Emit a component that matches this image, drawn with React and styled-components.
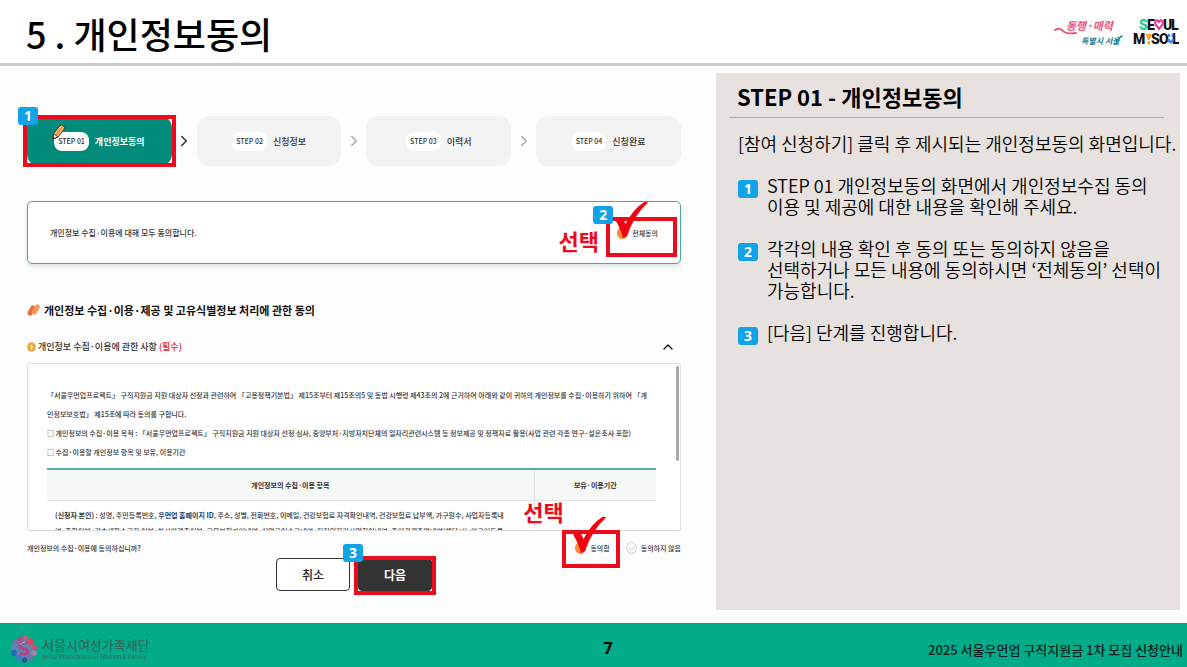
import React from 'react'
import styled, { createGlobalStyle } from 'styled-components'
import { FiChevronRight, FiChevronUp } from 'react-icons/fi'

const steps = [
  { no: 'STEP 01', label: '개인정보동의' },
  { no: 'STEP 02', label: '신청정보' },
  { no: 'STEP 03', label: '이력서' },
  { no: 'STEP 04', label: '신청완료' },
]

const guides = [
  [
    'STEP 01 개인정보동의 화면에서 개인정보수집 동의',
    '이용 및 제공에 대한 내용을 확인해 주세요.',
  ],
  [
    '각각의 내용 확인 후 동의 또는 동의하지 않음을',
    '선택하거나 모든 내용에 동의하시면 ‘전체동의’ 선택이',
    '가능합니다.',
  ],
  ['[다음] 단계를 진행합니다.'],
]

export default function App() {
  return (
    <>
      <GlobalStyle />
      <Page>
        <Header>
          <h1>5 . 개인정보동의</h1>
          <Logos>
            <SloganLogo />
            <SeoulLogo />
          </Logos>
        </Header>
        <Main>
          <FormArea />
          <GuidePanel />
        </Main>
        <Footer>
          <Foundation>
            <FoundationMark />
            <div>
              <strong>서울시여성가족재단</strong>
              <small>Seoul Foundation of Women &amp; Family</small>
            </div>
          </Foundation>
          <PageNumber>7</PageNumber>
          <FooterTitle>2025 서울우먼업 구직지원금 1차 모집 신청안내</FooterTitle>
        </Footer>
      </Page>
    </>
  )
}

const FormArea = () => {
  return (
    <Form onSubmit={(e) => e.preventDefault()}>
      <Steps>
        {steps.map((step, i) => (
          <React.Fragment key={step.no}>
            {i > 0 && (
              <StepArrow $active={i === 1} aria-hidden='true'>
                <FiChevronRight />
              </StepArrow>
            )}
            <Step $active={i === 0}>
              <StepNo>{step.no}</StepNo>
              <span>{step.label}</span>
              {i === 0 && (
                <>
                  <PencilIcon />
                  <StepFrame />
                  <StepBadge>1</StepBadge>
                </>
              )}
            </Step>
          </React.Fragment>
        ))}
      </Steps>

      <AgreeAll>
        <p>개인정보 수집·이용에 대해 모두 동의합니다.</p>
        <Option>
          <RoundInput type='checkbox' defaultChecked />
          전체동의
          <AllFrame />
          <CheckMark />
          <AllBadge>2</AllBadge>
          <AllPick>선택</AllPick>
        </Option>
      </AgreeAll>

      <SectionTitle>
        <LeafIcon />
        개인정보 수집·이용·제공 및 고유식별정보 처리에 관한 동의
      </SectionTitle>

      <TermsTitle>
        <h3>
          <CoinIcon />
          개인정보 수집·이용에 관한 사항 <em>(필수)</em>
        </h3>
        <ToggleButton type='button' aria-label='접기'>
          <FiChevronUp />
        </ToggleButton>
      </TermsTitle>

      <Terms>
        <p>
          「서울우먼업프로젝트」 구직지원금 지원 대상자 선정과 관련하여
          「고용정책기본법」 제15조부터 제15조의5 및 동법 시행령 제43조의 2에
          근거하여 아래와 같이 귀하의 개인정보를 수집·이용하기 위하여 「개
          <br />
          인정보보호법」 제15조에 따라 동의를 구합니다.
        </p>
        <p>
          □ 개인정보의 수집·이용 목적 : 「서울우먼업프로젝트」 구직지원금 지원
          대상자 선정 심사, 중앙부처·지방자치단체의 일자리관련시스템 등 정보제공
          및 정책자료 활용(사업 관련 각종 연구·설문조사 포함)
        </p>
        <p>□ 수집·이용할 개인정보 항목 및 보유, 이용기간</p>
        <TermsTable>
          <thead>
            <tr>
              <th>개인정보의 수집·이용 항목</th>
              <th>보유·이용기간</th>
            </tr>
          </thead>
          <tbody>
            <tr>
              <td>
                <b>(신청자 본인)</b> : 성명, 주민등록번호,{' '}
                <strong>우먼업 홈페이지 ID</strong>, 주소, 성별, 전화번호,
                이메일, 건강보험료 자격확인내역, 건강보험료 납부액, 가구원수,
                사업자등록내
                <br />
                역, 혼합여부, 기초생활수급자 여부, 차상위계층여부,
                고용보험가입내역, 실업급여수급내역, 직접일자리사업참여내역,
                혼인관계증명내역(해당시), 외국인등록
              </td>
              <td>동의일로부터 5년</td>
            </tr>
          </tbody>
        </TermsTable>
        <ScrollThumb />
      </Terms>

      <Question>
        <p>개인정보의 수집·이용에 동의하십니까?</p>
        <Options>
          <Option>
            <RoundInput type='radio' name='agree' defaultChecked />
            동의함
            <YesFrame />
            <CheckMark />
            <YesPick>선택</YesPick>
          </Option>
          <Option>
            <RoundInput type='radio' name='agree' />
            동의하지 않음
            <FaintCheck viewBox='0 0 12 12'>
              <path d='M3 6.2 5.2 8.4 9 4' />
            </FaintCheck>
          </Option>
        </Options>
      </Question>

      <Actions>
        <ActionButton type='button'>취소</ActionButton>
        <NextWrap>
          <ActionButton type='submit' $dark>
            다음
          </ActionButton>
          <NextFrame />
          <NextBadge>3</NextBadge>
        </NextWrap>
      </Actions>
    </Form>
  )
}

const GuidePanel = () => {
  return (
    <Panel>
      <h2>STEP 01 - 개인정보동의</h2>
      <p>[참여 신청하기] 클릭 후 제시되는 개인정보동의 화면입니다.</p>
      <ol>
        {guides.map((lines, i) => (
          <li key={lines[0]}>
            <Badge>{i + 1}</Badge>
            <div>
              {lines.map((line) => (
                <div key={line}>{line}</div>
              ))}
            </div>
          </li>
        ))}
      </ol>
    </Panel>
  )
}

const PencilIcon = () => (
  <Pencil viewBox='0 0 14 16'>
    <path d='M1.5 9.5 8 1.5Q9.5.3 11.5 2 13.2 3.5 12.3 5L6 13 1 15Z' fill='#f6b469' stroke='#4a3626' />
    <path d='M1.5 9.5 6 13 1 15Z' fill='#f5e9dc' stroke='#4a3626' />
    <path d='M4 11 10 3.3' stroke='#c9803d' />
    <path d='M1.2 12.6 3 14.2.6 15.4Z' fill='#222' />
  </Pencil>
)

const CheckMark = () => (
  <Check viewBox='0 0 34 38'>
    <path d='M1 18.500 8 16.500Q10 19 11.500 23 19 8 31 .5L34 1.500Q20 14 13 35L9 37Q6 26 1 18.500Z' />
  </Check>
)

const LeafIcon = () => (
  <svg width='14' height='14' viewBox='0 0 14 14' aria-hidden='true'>
    <rect x='2' y='2' width='5' height='11' rx='2.500' transform='rotate(28 4.500 7.500)' fill='#ea6a36' />
    <rect x='6.500' y='1' width='5' height='11' rx='2.500' transform='rotate(28 9 6.500)' fill='#f99a5c' />
  </svg>
)

const CoinIcon = () => (
  <svg width='9' height='10' viewBox='0 0 9 10' aria-hidden='true'>
    <ellipse cx='4.500' cy='5' rx='4.300' ry='4.800' fill='#f3a536' />
    <path d='M3.600 3 5.500 5 3.600 7' fill='none' stroke='#fff' strokeWidth='1.200' />
  </svg>
)

const SloganLogo = () => (
  <svg width='70' height='32' viewBox='0 0 70 32' role='img' aria-label='동행·매력 특별시 서울'>
    <g fontFamily='"Noto Sans CJK KR", sans-serif' fontWeight='700' fontStyle='italic'>
      <text x='12' y='14' fontSize='11' fill='#e2587f'>동행·매력</text>
      <text x='27' y='28' fontSize='8' fill='#23829c'>특별시 서울</text>
    </g>
    <path d='M1 14Q5 11.500 8 14 11 18.500 22 17' fill='none' stroke='#e2587f' strokeWidth='2' strokeLinecap='round' />
    <path d='M63 26Q65 21 68 20' fill='none' stroke='#23829c' strokeWidth='1.500' strokeLinecap='round' />
  </svg>
)

const SeoulLogo = () => (
  <svg width='46' height='32' viewBox='0 0 46 32' role='img' aria-label='SEOUL MY SOUL'>
    <g fontFamily='Roboto, "Liberation Sans", sans-serif' fontWeight='900' fontSize='14' fill='#111'>
      <text x='6' y='14' fill='#1fd08a'>S</text>
      <text x='14' y='14'>E</text>
      <text x='30' y='14'>U</text>
      <text x='38' y='14'>L</text>
      <text x='0' y='28'>M</text>
      <text x='18' y='28'>S</text>
      <text x='26' y='28'>O</text>
      <text x='39' y='28'>L</text>
    </g>
    <path d='M26 13 22.400 8Q21.400 4.200 24 4.200 25.500 4.500 26 6.500 26.500 4.500 28 4.200 30.600 4.200 29.600 8Z' fill='none' stroke='#f0308c' strokeWidth='2' />
    <path d='M12.500 18H19L16.600 24H14.900Z' fill='#f9a72b' />
    <circle cx='15.800' cy='26.600' r='1.600' fill='#f9a72b' />
    <path d='M35 18H37V21H35ZM38.500 18H40.500V21H38.500Z' fill='#2f86ee' />
    <path d='M35.300 23Q37.800 29.500 40.300 23' fill='none' stroke='#2f86ee' strokeWidth='2.400' />
  </svg>
)

const FoundationMark = () => (
  <svg width='28' height='28' viewBox='0 0 28 28' aria-hidden='true'>
    <circle cx='14' cy='14' r='11' fill='#5f86a8' />
    <circle cx='10' cy='3.800' r='2.600' fill='#a8507a' />
    <circle cx='15.500' cy='2.600' r='2.300' fill='#d9566f' />
    <circle cx='20.500' cy='6.500' r='3.200' fill='#e8405f' />
    <circle cx='24.500' cy='12' r='2.600' fill='#d84a72' />
    <circle cx='24' cy='18' r='2.800' fill='#b07ab4' />
    <circle cx='20' cy='22.500' r='3' fill='#7c6cb4' />
    <circle cx='14.500' cy='25' r='2.700' fill='#2d55a5' />
    <circle cx='8.500' cy='23' r='2.800' fill='#3b7cc4' />
    <circle cx='4' cy='18' r='2.900' fill='#2b67b8' />
    <circle cx='3.500' cy='12' r='2.500' fill='#6a7fc0' />
    <circle cx='5' cy='7' r='2.300' fill='#8d6ba5' />
    <path d='M17 8Q11 6.500 9.800 10 9.500 13 14 13.700 18.500 14.500 17.500 17.800 15.500 20.500 10 18.500' fill='none' stroke='#b8408c' strokeWidth='3' />
    <path d='M15.500 7.200Q11 7 10 10' fill='none' stroke='#d99bc6' strokeWidth='1' />
  </svg>
)

const GlobalStyle = createGlobalStyle`
  * {
    box-sizing: border-box;
  }
  body {
    margin: 0;
    background: #fdfdfd;
    color: #000;
    font-family: 'Noto Sans CJK KR', sans-serif;
  }
  h1, h2, h3, p, ol {
    margin: 0;
    padding: 0;
  }
  ol {
    list-style: none;
  }
  button, input {
    font-family: inherit;
    margin: 0;
  }
`

const Page = styled.div`
  min-height: 100vh;
  display: flex;
  flex-direction: column;
`

const Header = styled.header`
  height: 66px;
  padding: 0 8px 0 26px;
  display: flex;
  align-items: center;
  justify-content: space-between;
  background: #fff;
  border-bottom: 3px solid #cbcbcb;
  h1 {
    font-size: 36px;
    line-height: 48px;
    font-weight: 500;
    padding-top: 2px;
  }
`

const Logos = styled.div`
  display: flex;
  gap: 9px;
`

const Main = styled.main`
  flex: 1;
  display: grid;
  grid-template-columns: minmax(0, 54fr) minmax(0, 35fr);
  padding: 7px 7px 13px 0;
`

const Form = styled.form`
  padding: 43px 35px 0 27px;
  color: #333;
`

const Steps = styled.ol`
  display: flex;
`

const Step = styled.li`
  position: relative;
  flex: 1;
  height: 50px;
  display: flex;
  align-items: center;
  justify-content: center;
  gap: 6px;
  border-radius: 12px;
  font-size: 9px;
  font-weight: ${(p) => (p.$active ? 700 : 500)};
  color: ${(p) => (p.$active ? '#fff' : '#333')};
  background: ${(p) => (p.$active ? '#018b7a' : '#f3f3f3')};
`

const StepNo = styled.span`
  padding: 0 4px;
  border-radius: 8px;
  background: #fff;
  color: #333;
  font-size: 7px;
  line-height: 19px;
  font-weight: 500;
`

const StepArrow = styled.li`
  width: 25px;
  display: flex;
  align-items: center;
  justify-content: center;
  font-size: 18px;
  color: ${(p) => (p.$active ? '#333' : '#aaa')};
`

const Pencil = styled.svg`
  position: absolute;
  left: 25px;
  top: 8px;
  width: 14px;
  height: 16px;
`

// red outline laid over the control that a step explains
const Frame = styled.span`
  position: absolute;
  border: 4px solid #ec0b1c;
  pointer-events: none;
`

const StepFrame = styled(Frame)`
  inset: -1px -4px;
`

const AllFrame = styled(Frame)`
  inset: -10px -19px -18px -11px;
`

const YesFrame = styled(Frame)`
  inset: -12px -10px -14px -13px;
`

const NextFrame = styled(Frame)`
  inset: -2px -4px -4px;
`

const Badge = styled.span`
  width: 20px;
  height: 18px;
  border-radius: 3px;
  background: #11a3e8;
  color: #fff;
  font-family: 'Noto Sans', sans-serif;
  font-size: 14px;
  line-height: 18px;
  font-weight: 700;
  text-align: center;
`

const FloatingBadge = styled(Badge)`
  position: absolute;
`

const StepBadge = styled(FloatingBadge)`
  left: -9px;
  top: -9px;
`

const AllBadge = styled(FloatingBadge)`
  left: -24px;
  top: -21px;
`

const NextBadge = styled(FloatingBadge)`
  left: -15px;
  top: -14px;
`

const Pick = styled.span`
  position: absolute;
  color: #ec0b1c;
  font-size: 22px;
  line-height: 28px;
  font-weight: 700;
  white-space: nowrap;
`

const AllPick = styled(Pick)`
  right: 59px;
  top: -1px;
`

const YesPick = styled(Pick)`
  right: 46px;
  top: -45px;
`

const AgreeAll = styled.div`
  margin-top: 35px;
  height: 63px;
  padding: 0 22px;
  display: flex;
  align-items: center;
  justify-content: space-between;
  border: 1px solid #4fa79b;
  border-radius: 5px;
  background: #fff;
  box-shadow: 0 2px 4px rgba(0, 90, 80, 0.15);
  font-size: 8px;
  font-weight: 500;
`

const Option = styled.label`
  position: relative;
  display: flex;
  align-items: center;
  gap: 4px;
  font-size: 7px;
  line-height: 12px;
`

const RoundInput = styled.input`
  appearance: none;
  width: 11px;
  height: 12px;
  border: 1px solid #d5d5d5;
  border-radius: 50%;
  background: #fff;
  &:checked {
    border-color: #f98d2f;
    background: #f98d2f;
  }
`

const Check = styled.svg`
  position: absolute;
  left: -3px;
  top: -26px;
  width: 34px;
  height: 38px;
  fill: #f5000f;
  pointer-events: none;
`

const FaintCheck = styled.svg`
  position: absolute;
  left: 0;
  top: 0;
  width: 12px;
  height: 12px;
  fill: none;
  stroke: #c8c8c8;
  pointer-events: none;
`

const SectionTitle = styled.h2`
  margin-top: 36px;
  display: flex;
  align-items: center;
  gap: 3px;
  color: #111;
  font-size: 11px;
  line-height: 20px;
  font-weight: 700;
`

const TermsTitle = styled.div`
  margin: 17px 5px 6px 0;
  display: flex;
  align-items: center;
  justify-content: space-between;
  h3 {
    display: flex;
    align-items: center;
    gap: 2px;
    font-size: 9px;
    line-height: 20px;
    font-weight: 500;
  }
  em {
    color: #e0202c;
    font-style: normal;
  }
`

const ToggleButton = styled.button`
  height: 16px;
  padding: 0;
  border: none;
  background: none;
  color: #111;
  font-size: 16px;
  line-height: 16px;
  cursor: pointer;
`

const Terms = styled.div`
  position: relative;
  height: 168px;
  padding: 22px 24px 0 19px;
  overflow: hidden;
  border: 1px solid #ddd;
  border-radius: 3px;
  background: #fff;
  font-size: 7px;
  line-height: 19px;
  font-weight: 500;
  white-space: nowrap;
`

const ScrollThumb = styled.span`
  position: absolute;
  right: 1px;
  top: 2px;
  width: 3px;
  height: 95px;
  border-radius: 2px;
  background: #a9a9a9;
`

const TermsTable = styled.table`
  width: 100%;
  margin-top: 6px;
  table-layout: fixed;
  border-collapse: collapse;
  border-top: 2px solid #5eada3;
  line-height: 16px;
  th {
    height: 31px;
    padding: 0;
    background: #f6f8f8;
    border-bottom: 1px solid #e3e3e3;
    font-weight: 700;
  }
  th:first-child {
    width: 80%;
  }
  td {
    padding: 6px 8px 22px;
  }
  th + th,
  td + td {
    border-left: 1px solid #e3e3e3;
    text-align: center;
  }
  td + td {
    padding-top: 20px;
    padding-bottom: 8px;
  }
  strong {
    color: #1f3a68;
  }
`

const Question = styled.div`
  margin-top: 11px;
  display: flex;
  align-items: center;
  justify-content: space-between;
  font-size: 7px;
  line-height: 12px;
  font-weight: 500;
`

const Options = styled.div`
  display: flex;
  gap: 16px;
`

const Actions = styled.div`
  margin-top: 4px;
  display: flex;
  justify-content: center;
  gap: 8px;
`

const NextWrap = styled.div`
  position: relative;
`

const ActionButton = styled.button`
  width: 74px;
  height: 33px;
  padding: 0;
  border: 1px solid #333;
  border-radius: 4px;
  background: ${(p) => (p.$dark ? '#333' : '#fff')};
  color: ${(p) => (p.$dark ? '#fff' : '#222')};
  font-size: 12px;
  font-weight: ${(p) => (p.$dark ? 700 : 500)};
  cursor: pointer;
`

const Panel = styled.aside`
  padding-top: 9px;
  background: #e7e2df;
  font-size: 18px;
  line-height: 21px;
  font-weight: 350;
  white-space: nowrap;
  h2 {
    margin: 0 16px 0 13px;
    padding: 0 8px 7px;
    border-bottom: 1px solid #e79a74;
    font-size: 22px;
    line-height: 28px;
    font-weight: 700;
  }
  p {
    margin: 15px 0 21px 22px;
  }
  ol {
    padding-left: 22px;
    display: flex;
    flex-direction: column;
    gap: 21px;
  }
  li {
    display: flex;
    gap: 9px;
  }
  ${Badge} {
    margin-top: 5px;
  }
`

const Footer = styled.footer`
  height: 44px;
  padding: 0 4px 0 10px;
  display: grid;
  grid-template-columns: 51fr auto 49fr;
  align-items: center;
  background: #03ac89;
`

const Foundation = styled.div`
  padding-top: 8px;
  display: flex;
  align-items: center;
  gap: 4px;
  color: #2f6b5e;
  strong,
  small {
    display: block;
  }
  strong {
    font-size: 13px;
    line-height: 16px;
    font-weight: 500;
  }
  small {
    font-size: 6px;
    line-height: 8px;
  }
`

const PageNumber = styled.span`
  padding-top: 6px;
  font-family: 'Noto Sans', sans-serif;
  font-size: 16px;
  font-weight: 700;
`

const FooterTitle = styled.span`
  padding-top: 8px;
  color: #0a1f1a;
  font-size: 13px;
  font-weight: 500;
  text-align: right;
`
